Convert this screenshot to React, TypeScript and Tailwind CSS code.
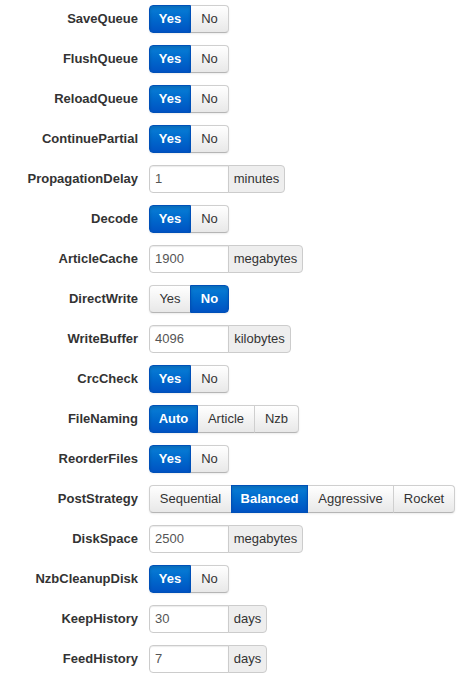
import React from "react";

type Row =
  | { label: string; kind: "switch"; options: string[]; active: number; widths: number[] }
  | { label: string; kind: "input"; value: string; unit: string; unitWidth: number };

const yesNo = (label: string, active: number): Row => ({
  label,
  kind: "switch",
  options: ["Yes", "No"],
  active,
  widths: [42, 39],
});

const rows: Row[] = [
  yesNo("SaveQueue", 0),
  yesNo("FlushQueue", 0),
  yesNo("ReloadQueue", 0),
  yesNo("ContinuePartial", 0),
  { label: "PropagationDelay", kind: "input", value: "1", unit: "minutes", unitWidth: 57 },
  yesNo("Decode", 0),
  { label: "ArticleCache", kind: "input", value: "1900", unit: "megabytes", unitWidth: 75 },
  yesNo("DirectWrite", 1),
  { label: "WriteBuffer", kind: "input", value: "4096", unit: "kilobytes", unitWidth: 63 },
  yesNo("CrcCheck", 0),
  {
    label: "FileNaming",
    kind: "switch",
    options: ["Auto", "Article", "Nzb"],
    active: 0,
    widths: [49, 58, 45],
  },
  yesNo("ReorderFiles", 0),
  {
    label: "PostStrategy",
    kind: "switch",
    options: ["Sequential", "Balanced", "Aggressive", "Rocket"],
    active: 1,
    widths: [83, 77, 87, 62],
  },
  { label: "DiskSpace", kind: "input", value: "2500", unit: "megabytes", unitWidth: 75 },
  yesNo("NzbCleanupDisk", 0),
  { label: "KeepHistory", kind: "input", value: "30", unit: "days", unitWidth: 39 },
  { label: "FeedHistory", kind: "input", value: "7", unit: "days", unitWidth: 39 },
];

const SwitchGroup = ({ options, active, widths }: { options: string[]; active: number; widths: number[] }) => (
  <div className="flex h-[28px] rounded-[4px] shadow-[0_1px_2px_rgba(0,0,0,0.08)]">
    {options.map((opt, i) => {
      const on = i === active;
      const first = i === 0;
      const last = i === options.length - 1;
      return (
        <div
          key={opt}
          style={{ width: widths[i] }}
          className={
            "flex items-center justify-center text-[13px] border " +
            (first ? "rounded-l-[4px] " : "") +
            (last ? "rounded-r-[4px] " : "") +
            (!first ? "-ml-px " : "") +
            (on
              ? "bg-gradient-to-b from-[#0b7fd6] to-[#0052c2] border-[#0050b8] text-white font-bold shadow-[inset_0_2px_3px_rgba(0,0,0,0.15)] z-10"
              : "bg-gradient-to-b from-white to-[#e8e8e8] border-[#cfcfcf] border-b-[#b5b5b5] text-[#333]")
          }
        >
          {opt}
        </div>
      );
    })}
  </div>
);

const UnitInput = ({ value, unit, unitWidth }: { value: string; unit: string; unitWidth: number }) => (
  <div className="flex h-[28px]">
    <div className="w-[80px] flex items-center pl-[5px] text-[13px] text-[#555] bg-white border border-[#cccccc] rounded-l-[4px] shadow-[inset_0_1px_1px_rgba(0,0,0,0.08)]">
      {value}
    </div>
    <div
      style={{ width: unitWidth }}
      className="-ml-px flex items-center justify-center text-[13px] text-[#333] bg-[#eeeeee] border border-[#cccccc] rounded-r-[4px]"
    >
      {unit}
    </div>
  </div>
);

export default function App() {
  return (
    <div className="w-[470px] h-[679px] bg-white pt-[5px] font-['Liberation_Sans',Arial,sans-serif]">
      <div className="flex flex-col gap-[12px]">
        {rows.map((row) => (
          <div key={row.label} className="flex items-center h-[28px]">
            <div className="w-[139px] pr-[1px] text-right text-[13px] font-bold text-[#333]">{row.label}</div>
            <div className="ml-[10px]">
              {row.kind === "switch" ? (
                <SwitchGroup options={row.options} active={row.active} widths={row.widths} />
              ) : (
                <UnitInput value={row.value} unit={row.unit} unitWidth={row.unitWidth} />
              )}
            </div>
          </div>
        ))}
      </div>
    </div>
  );
}
